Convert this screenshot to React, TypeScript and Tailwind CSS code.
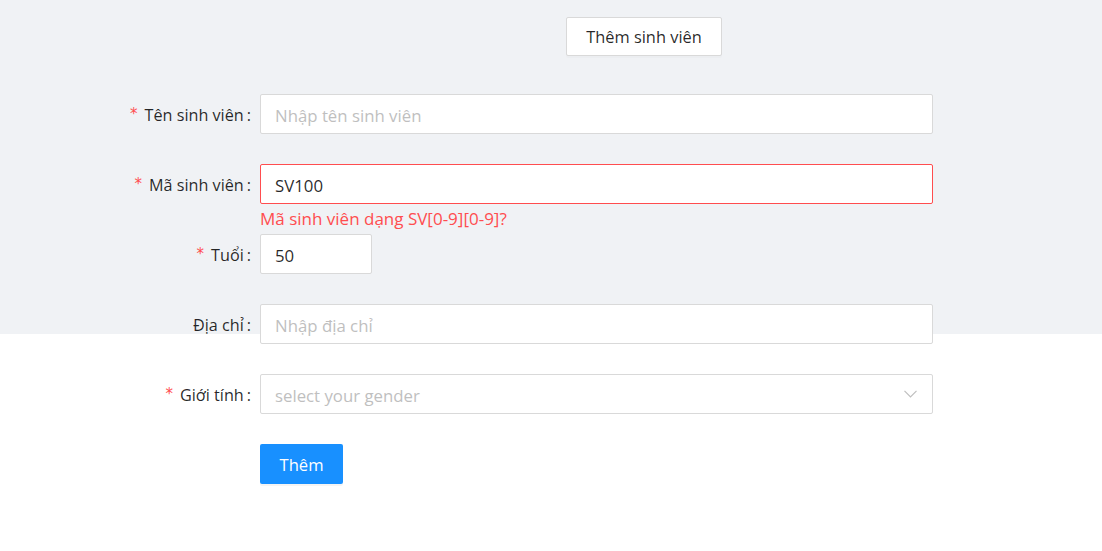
import React from 'react';

const Label: React.FC<{ text: string; required?: boolean }> = ({ text, required }) => (
  <div className="w-[260px] shrink-0 flex items-center justify-end pr-[9px] pt-[3px] h-10 text-[16.2px] text-black/85">
    {required && <span className="text-[#ff4d4f] mr-[7px] text-[15px] leading-none relative -top-[1px] font-['DejaVu_Sans',sans-serif]">*</span>}
    <span>{text}</span>
    <span className="ml-[3px]">:</span>
  </div>
);

const inputBase =
  'h-10 bg-white border rounded-[2px] px-[14px] pt-[3px] text-[16.8px] text-black/85 outline-none placeholder:text-[#bfbfbf]';

const App: React.FC = () => {
  return (
    <div className="min-h-[551px] bg-white font-['Open_Sans',sans-serif]">
      <div className="h-[334px] bg-[#f0f2f5]">
        <div className="pt-[17px] pl-[566px]">
          <button className="w-[156px] h-[39px] pt-[2px] bg-white border border-[#d9d9d9] rounded-[2px] text-[16.4px] text-black/85 shadow-[0_2px_0_rgba(0,0,0,0.015)]">
            Thêm sinh viên
          </button>
        </div>

        <form className="mt-[38px] flex flex-col" onSubmit={(e) => e.preventDefault()}>
          {/* Tên sinh viên */}
          <div className="flex mb-[30px]">
            <Label text="Tên sinh viên" required />
            <input className={`${inputBase} w-[673px] border-[#d9d9d9]`} placeholder="Nhập tên sinh viên" />
          </div>

          {/* Mã sinh viên */}
          <div className="flex">
            <Label text="Mã sinh viên" required />
            <div className="flex flex-col">
              <input className={`${inputBase} w-[673px] border-[#ff4d4f]`} defaultValue="SV100" />
              <div className="h-[30px] leading-[29px] text-[17px] text-[#ff4d4f]">Mã sinh viên dạng SV[0-9][0-9]?</div>
            </div>
          </div>

          {/* Tuổi */}
          <div className="flex mb-[30px]">
            <Label text="Tuổi" required />
            <input className={`${inputBase} w-[112px] border-[#d9d9d9]`} defaultValue="50" />
          </div>

          {/* Địa chỉ */}
          <div className="flex mb-[30px]">
            <Label text="Địa chỉ" />
            <input className={`${inputBase} w-[673px] border-[#d9d9d9]`} placeholder="Nhập địa chỉ" />
          </div>

          {/* Giới tính */}
          <div className="flex mb-[30px]">
            <Label text="Giới tính" required />
            <div className="w-[673px] h-10 bg-white border border-[#d9d9d9] rounded-[2px] flex items-center justify-between pl-[14px] pr-[15px]">
              <span className="text-[16.8px] text-[#bfbfbf] pt-[3px]">select your gender</span>
              <svg width="13" height="8" viewBox="0 0 13 8" fill="none">
                <path d="M0.5 0.8 L6.5 7 L12.5 0.8" stroke="#bfbfbf" strokeWidth="1.2" />
              </svg>
            </div>
          </div>

          {/* Submit */}
          <div className="flex">
            <div className="w-[260px] shrink-0" />
            <button
              type="submit"
              className="w-[83px] h-10 pt-[2px] bg-[#1890ff] text-white text-[16.6px] rounded-[2px] shadow-[0_2px_0_rgba(0,0,0,0.045)]"
            >
              Thêm
            </button>
          </div>
        </form>
      </div>
    </div>
  );
};

export default App;
